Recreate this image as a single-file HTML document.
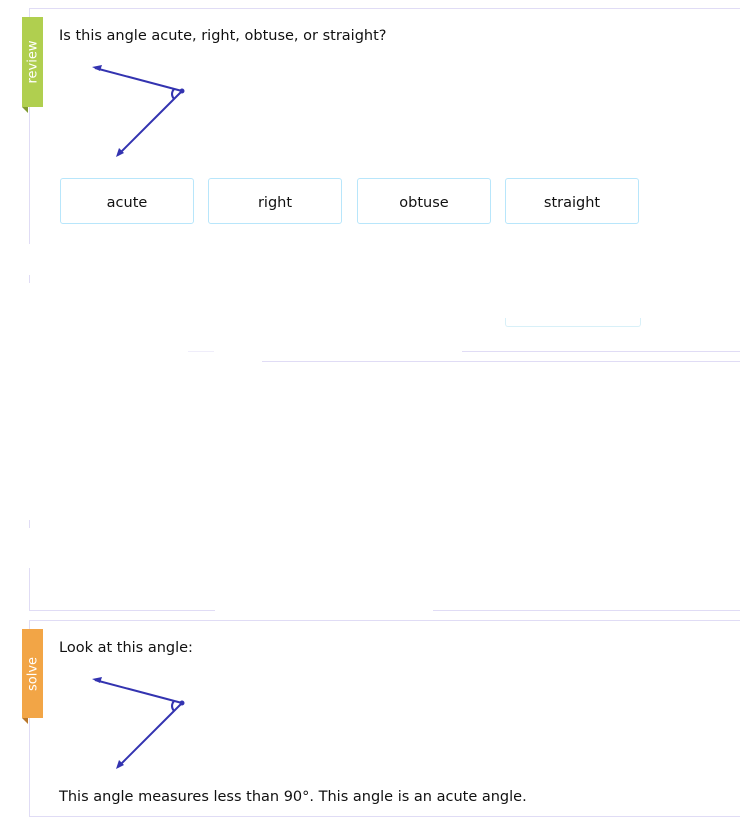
<!DOCTYPE html>
<html><head><meta charset="utf-8"><style>
body{margin:0;width:740px;height:818px;background:#fff;position:relative;overflow:hidden;font-family:"DejaVu Sans",Verdana,sans-serif;font-size:14.5px;color:#111}
.a{position:absolute}
.l{position:absolute;background:#e0dcf5}
.rib{position:absolute;left:22px;width:21px;color:#fff;font-size:13px}
.rib span{position:absolute;left:50%;top:50%;transform:translate(-50%,-50%) rotate(-90deg);white-space:nowrap}
.fold{position:absolute;left:22px;width:0;height:0;border-top:6px solid;border-left:6px solid transparent}
.btn{position:absolute;top:178px;width:134px;height:46px;border:1px solid #b8e6fb;border-radius:3px;text-align:center;line-height:46px;padding-top:1px;font-size:14.5px;color:#111;box-sizing:border-box}
</style></head><body>
<!-- card 1 -->
<div class="l" style="left:29px;top:8px;width:711px;height:1px"></div>
<div class="l" style="left:29px;top:8px;width:1px;height:236px"></div>
<div class="l" style="left:29px;top:275px;width:1px;height:8px"></div>
<div class="l" style="left:29px;top:520px;width:1px;height:8px"></div>
<div class="l" style="left:29px;top:568px;width:1px;height:42px"></div>
<div class="l" style="left:29px;top:610px;width:186px;height:1px"></div>
<div class="l" style="left:433px;top:610px;width:307px;height:1px"></div>
<div class="l" style="left:462px;top:351px;width:278px;height:1px"></div>
<div class="l" style="left:188px;top:351px;width:26px;height:1px;opacity:.5"></div>
<div class="l" style="left:262px;top:361px;width:478px;height:1px"></div>
<div class="a" style="left:505px;top:318px;width:134px;height:8px;border:1px solid #d8f0f8;border-top:none;border-radius:0 0 3px 3px"></div>

<div class="rib" style="top:17px;height:90px;background:#b0cf4f"><span>review</span></div>
<div class="fold" style="top:107px;border-top-color:#7f9a30"></div>

<div class="a" style="left:59px;top:28px">Is this angle acute, right, obtuse, or straight?</div>
<svg class="a" style="left:0;top:0" width="740" height="818">
<g stroke="#3333b0" stroke-width="2" fill="none">
<line x1="182" y1="91" x2="95" y2="68"/>
<line x1="182" y1="91" x2="118" y2="155"/>
<path d="M174 89 Q170 94 174 99"/>
<line x1="182" y1="703" x2="95" y2="680"/>
<line x1="182" y1="703" x2="118" y2="767"/>
<path d="M174 701 Q170 706 174 711"/>
</g>
<g fill="#3333b0">
<circle cx="182" cy="91" r="2.5"/>
<path d="M92 67 L102 65 L100 71 Z"/>
<path d="M116 157 L119 148 L124 153 Z"/>
<circle cx="182" cy="703" r="2.5"/>
<path d="M92 679 L102 677 L100 683 Z"/>
<path d="M116 769 L119 760 L124 765 Z"/>
</g>
</svg>
<div class="btn" style="left:60px">acute</div>
<div class="btn" style="left:208px">right</div>
<div class="btn" style="left:357px">obtuse</div>
<div class="btn" style="left:505px">straight</div>

<!-- card 2 -->
<div class="l" style="left:29px;top:620px;width:711px;height:1px"></div>
<div class="l" style="left:29px;top:620px;width:1px;height:197px"></div>
<div class="l" style="left:29px;top:816px;width:711px;height:1px"></div>
<div class="rib" style="top:629px;height:89px;background:#f2a546"><span>solve</span></div>
<div class="fold" style="top:718px;border-top-color:#b8762a"></div>
<div class="a" style="left:59px;top:640px">Look at this angle:</div>
<div class="a" style="left:59px;top:789px">This angle measures less than 90°. This angle is an acute angle.</div>
</body></html>
